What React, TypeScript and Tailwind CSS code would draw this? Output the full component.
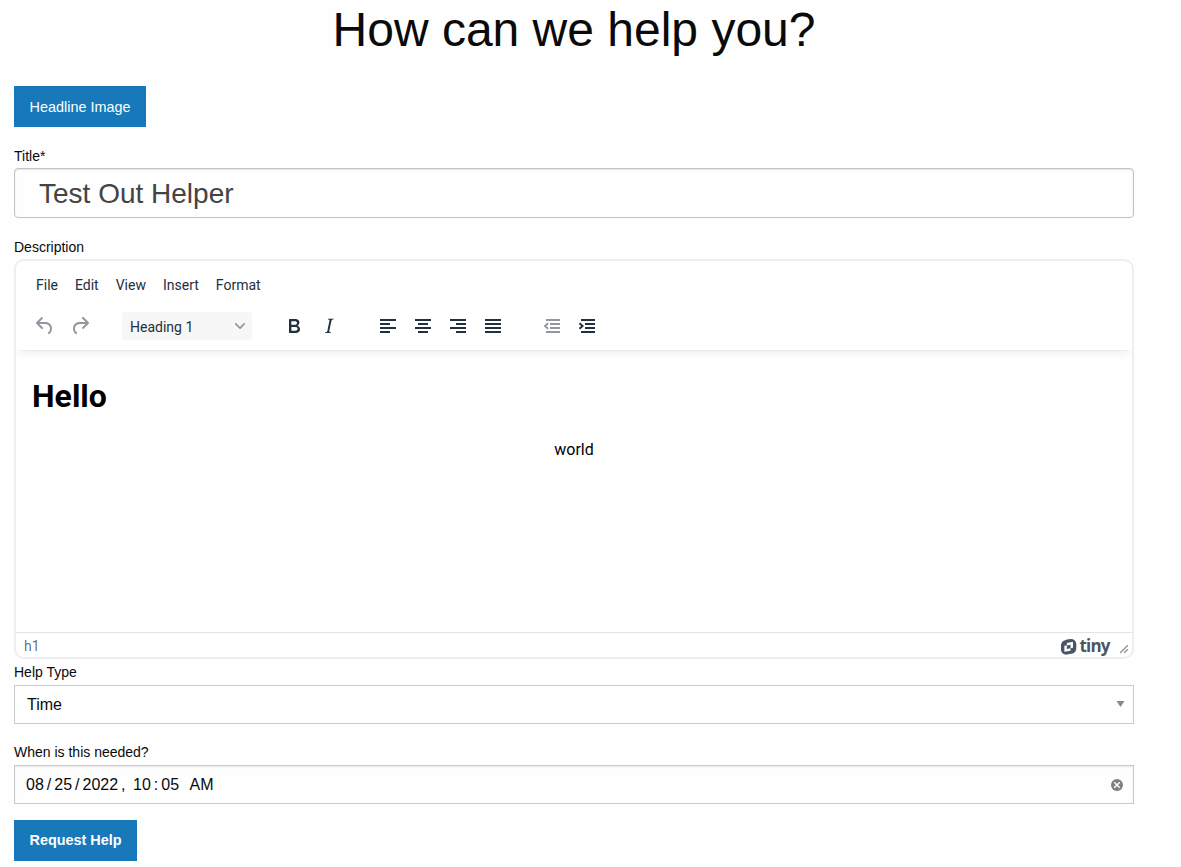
import React from "react";

const undo = "M6.4 8H12c3.7 0 6.2 2 6.8 5.1.6 2.7-.4 5.6-2.3 6.8a1 1 0 01-1-1.8c1.1-.6 1.8-2.7 1.4-4.6-.5-2.1-2.1-3.5-4.9-3.5H6.4l3.3 3.3a1 1 0 11-1.4 1.4l-5-5a1 1 0 010-1.4l5-5a1 1 0 011.4 1.4L6.4 8z";
const redo = "M17.6 10H12c-2.8 0-4.4 1.4-4.9 3.5-.4 2 .3 4 1.4 4.6a1 1 0 11-1 1.8c-2-1.2-2.9-4.1-2.3-6.8.6-3 3-5.1 6.8-5.1h5.6l-3.3-3.3a1 1 0 111.4-1.4l5 5a1 1 0 010 1.4l-5 5a1 1 0 01-1.4-1.4l3.3-3.3z";
const bold = "M7.8 19c-.3 0-.5 0-.6-.2l-.2-.5V5.7c0-.2 0-.4.2-.5l.6-.2h5c1.5 0 2.7.3 3.5 1 .7.6 1.1 1.4 1.1 2.5a3 3 0 01-.6 1.9c-.4.6-1 1-1.6 1.2.4.1.9.3 1.3.6s.8.7 1 1.2c.4.4.5 1 .5 1.6 0 1.3-.4 2.3-1.3 3-.8.7-2.1 1-3.8 1H7.8zm5-8.3c.6 0 1.2-.1 1.6-.5.4-.3.6-.7.6-1.3 0-1.1-.8-1.7-2.3-1.7H9.3v3.5h3.4zm.5 6c.7 0 1.3-.1 1.7-.4.4-.4.6-.9.6-1.5s-.2-1-.7-1.4c-.4-.3-1-.4-2-.4H9.4v3.8h4z";
const italic = "M16.7 4.7l-.1.9h-.3c-.6 0-1 0-1.4.3-.3.3-.4.6-.5 1.1l-2.1 9.8v.6c0 .5.4.8 1.4.8h.2l-.2.8H8l.2-.8h.2c1.1 0 1.8-.5 2-1.5l2-9.8.1-.5c0-.6-.4-.8-1.4-.8h-.3l.2-.9h5.8z";
const alignLeft = "M4 5h16v2H4zM4 9h10v2H4zM4 13h16v2H4zM4 17h10v2H4z";
const alignCenter = "M4 5h16v2H4zM7 9h10v2H7zM4 13h16v2H4zM7 17h10v2H7z";
const alignRight = "M4 5h16v2H4zM10 9h10v2H10zM4 13h16v2H4zM10 17h10v2H10z";
const alignJustify = "M4 5h16v2H4zM4 9h16v2H4zM4 13h16v2H4zM4 17h16v2H4z";
const outdent = "M6 5h14v2H6zM10 9h10v2H10zM10 13h10v2H10zM6 17h14v2H6zM7.5 8.4l1.3 1.5-2.4 2.1 2.4 2.1-1.3 1.5L3.6 12z";
const indent = "M6 5h14v2H6zM10 9h10v2H10zM10 13h10v2H10zM6 17h14v2H6zM5.1 8.4L3.8 9.9 6.2 12l-2.4 2.1 1.3 1.5L9 12z";
const tinyMark = "M10.143 0c2.608.015 5.186 2.178 5.186 5.331 0 0 .077 3.812-.084 4.87-.361 2.41-2.164 4.074-4.65 4.496-1.453.284-2.523.49-3.212.623-.373.071-.634.122-.785.152-.184.038-.997.145-1.35.145-2.732 0-5.21-2.04-5.248-5.33 0 0 0-3.514.03-4.442.093-2.4 1.758-4.342 4.926-4.963 0 0 3.875-.752 4.036-.782.368-.07.775-.1 1.15-.1Zm1.826 2.8L5.83 3.989v2.393l-2.455.475v5.968l6.137-1.189V9.243l2.456-.476V2.8ZM5.83 6.382l3.682-.713v3.574l-3.682.713V6.382Z";

function Tool({ d, dim = false }: { d: string; dim?: boolean }) {
  return (
    <button className="flex h-7 w-[35px] items-center justify-center">
      <svg width="24" height="24" viewBox="0 0 24 24" className={dim ? "fill-[#222f3e]/50" : "fill-[#222f3e]"}>
        <path d={d} />
      </svg>
    </button>
  );
}

function Editor() {
  return (
    <div className="flex h-[400px] flex-col overflow-hidden rounded-[10px] border-2 border-[#eeeeee] bg-white font-['Roboto',sans-serif]">
      <header className="relative z-10 h-[89px] shrink-0 shadow-[0_2px_2px_-2px_rgba(34,47,62,0.1),0_8px_8px_-4px_rgba(34,47,62,0.07)]">
        <nav className="flex gap-[17px] pt-[15px] pl-5 text-sm leading-[18px] text-[#222f3e]">
          <span>File</span>
          <span>Edit</span>
          <span>View</span>
          <span>Insert</span>
          <span>Format</span>
        </nav>
        <div className="flex pt-[18px] pl-[11px]">
          <Tool d={undo} dim />
          <Tool d={redo} dim />
          <button className="ml-[25px] flex h-7 w-[130px] items-center justify-between rounded-[3px] bg-[#f7f7f7] pr-[7px] pl-2 text-sm text-[#222f3e]">
            <span className="pt-[2px]">Heading 1</span>
            <svg width="10" height="10" viewBox="0 0 10 10" className="fill-[#222f3e]/50">
              <path d="M8.7 2.2c.3-.3.8-.3 1 0 .4.4.4.9 0 1.2L5.7 7.8c-.3.3-.9.3-1.2 0L.2 3.4a.8.8 0 010-1.2c.3-.3.8-.3 1.1 0L5 6l3.7-3.8z" />
            </svg>
          </button>
          <div className="ml-6 flex"><Tool d={bold} /><Tool d={italic} /></div>
          <div className="ml-6 flex"><Tool d={alignLeft} /><Tool d={alignCenter} /><Tool d={alignRight} /><Tool d={alignJustify} /></div>
          <div className="ml-6 flex"><Tool d={outdent} dim /><Tool d={indent} /></div>
        </div>
      </header>
      <main className="flex-1 px-4 pt-6 text-black">
        <h1 className="text-[32px] leading-[45px] font-bold">Hello</h1>
        <p className="mt-5 text-center text-base leading-[22px]">world</p>
      </main>
      <footer className="flex h-[25px] shrink-0 items-center border-t border-[#e3e3e3] pr-[3px] pl-2 text-sm text-[#222f3e]/70">
        <span className="flex-1 pt-[2px]">h1</span>
        <svg width="16" height="16" viewBox="0 0 16 16" className="mt-[3px]">
          <path fill="#4b5565" fillRule="evenodd" d={tinyMark} />
        </svg>
        <span className="mt-[2px] ml-[2.5px] w-[31.5px] text-[17px] leading-5 font-bold tracking-[-0.8px] text-[#4b5565] font-['Open_Sans',sans-serif]">tiny</span>
        <svg width="10" height="10" viewBox="0 0 10 10" className="mt-2 ml-[8px] fill-[#222f3e]/50">
          <path d="M8.1 1.1A.5.5 0 119 2l-7 7A.5.5 0 111 8l7-7zM8.1 5.1A.5.5 0 119 6l-3 3A.5.5 0 115 8l3-3z" />
        </svg>
      </footer>
    </div>
  );
}

export default function App() {
  return (
    <div className="h-[867px] overflow-hidden bg-[#fefefe] pr-[47px] pl-[14px] font-['Liberation_Sans',Arial,sans-serif] text-[#0a0a0a]">
      <h1 className="h-[86px] text-center text-[48px] leading-[60px]">How can we help you?</h1>
      <button className="block h-[41px] w-[132px] bg-[#1779ba] pt-[2px] text-[14.4px] text-[#fefefe]">Headline Image</button>
      <label className="mt-[17px] block text-sm leading-6">Title*</label>
      <input defaultValue="Test Out Helper" className="block h-[50px] w-full rounded border border-[#c2c2c2] bg-[#fefefe] px-6 pt-[2px] text-[28px] text-[#444444] shadow-[inset_0_1px_2px_rgba(10,10,10,0.1)]" />
      <label className="mt-[17px] block text-sm leading-6">Description</label>
      <Editor />
      <label className="block pt-px text-sm leading-[25px]">Help Type</label>
      <div className="flex h-[39px] items-center justify-between border border-[#cacaca] bg-[#fefefe] pr-2 pl-3 text-base">
        <span>Time</span>
        <svg width="9" height="6" viewBox="0 0 9 6" className="mb-px"><path fill="#8a8a8a" d="M.5 0h8L4.5 6z" /></svg>
      </div>
      <label className="mt-4 block text-sm leading-[25px]">When is this needed?</label>
      <div className="flex h-[39px] items-center border border-[#cacaca] bg-[#fefefe] pr-[10px] pl-[11px] text-base shadow-[inset_0_1px_2px_rgba(10,10,10,0.1)]">
        <span>08</span><span className="px-[3px]">/</span><span>25</span><span className="px-[3px]">/</span><span>2022</span>
        <span className="ml-[3px]">,</span><span className="ml-[7.5px]">10</span><span className="px-[3px]">:</span><span>05</span>
        <span className="ml-[10.5px] flex-1">AM</span>
        <svg width="12" height="12" viewBox="0 0 12 12"><circle cx="6" cy="6" r="6" fill="#808080" /><path d="M3.2 3.2l5.6 5.6M8.8 3.2L3.2 8.8" stroke="#fefefe" strokeWidth="1.5" /></svg>
      </div>
      <button className="mt-4 block h-[41px] w-[123px] bg-[#1779ba] text-[14.4px] font-bold text-[#fefefe]">Request Help</button>
    </div>
  );
}
